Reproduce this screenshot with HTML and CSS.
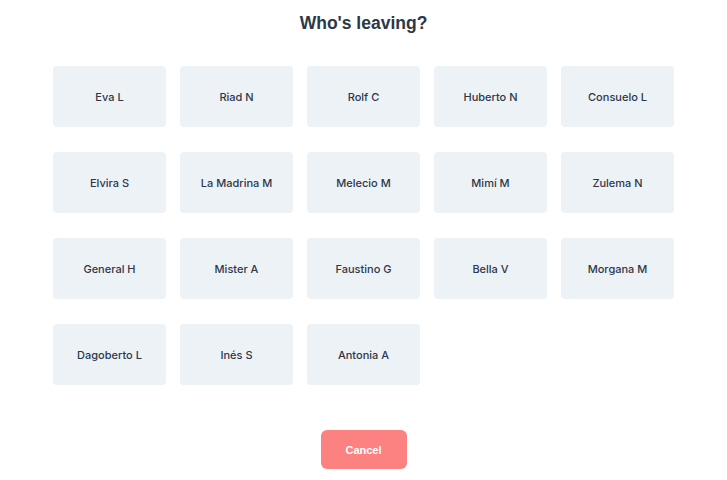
FILE: index.html
```html
<!DOCTYPE html>
<html lang="en">
<head>
    <meta charset="UTF-8">
    <meta name="viewport" content="width=device-width, initial-scale=1.0">
    <title>Who's leaving?</title>
    <link rel="stylesheet" href="styles.css">
</head>
<body>
    <div class="container">
        <h1 class="title">Who's leaving?</h1>

        <div class="people">
            <button class="person">Eva L</button>
            <button class="person">Riad N</button>
            <button class="person">Rolf C</button>
            <button class="person">Huberto N</button>
            <button class="person">Consuelo L</button>
            <button class="person">Elvira S</button>
            <button class="person">La Madrina M</button>
            <button class="person">Melecio M</button>
            <button class="person">Mimí M</button>
            <button class="person">Zulema N</button>
            <button class="person">General H</button>
            <button class="person">Mister A</button>
            <button class="person">Faustino G</button>
            <button class="person">Bella V</button>
            <button class="person">Morgana M</button>
            <button class="person">Dagoberto L</button>
            <button class="person">Inés S</button>
            <button class="person">Antonia A</button>
        </div>

        <div class="actions">
            <button class="cancel-button">Cancel</button>
        </div>
    </div>
</body>
</html>
```

FILE: styles.css
```css
body {
    margin: 0;
    padding: 0;
    font-family: 'Inter', 'Liberation Sans', sans-serif;
    color: #2d3748;
    background: #fff;
}

.container {
    width: 621px;
    margin: 0 auto;
}

.title {
    margin: 0;
    padding-top: 11px;
    font-family: 'Liberation Sans', Arial, sans-serif;
    font-size: 17.5px;
    line-height: 24px;
    font-weight: bold;
    text-align: center;
    color: #2d3748;
}

.people {
    display: grid;
    grid-template-columns: repeat(5, 1fr);
    grid-auto-rows: 61px;
    column-gap: 14px;
    row-gap: 25px;
    margin-top: 31px;
}

.person {
    border: none;
    border-radius: 4px;
    background: #edf2f7;
    color: #2d3748;
    font-family: 'Inter', 'Liberation Sans', sans-serif;
    font-size: 11px;
    font-weight: 500;
    cursor: pointer;
    padding: 0;
}

.person:hover {
    background: #e2e8f0;
}

.actions {
    display: flex;
    justify-content: center;
    margin-top: 45px;
}

.cancel-button {
    width: 86px;
    height: 39px;
    border: none;
    border-radius: 6px;
    background: #fc8181;
    color: #fff;
    font-family: 'Liberation Sans', Arial, sans-serif;
    font-size: 11px;
    font-weight: bold;
    cursor: pointer;
}
```
